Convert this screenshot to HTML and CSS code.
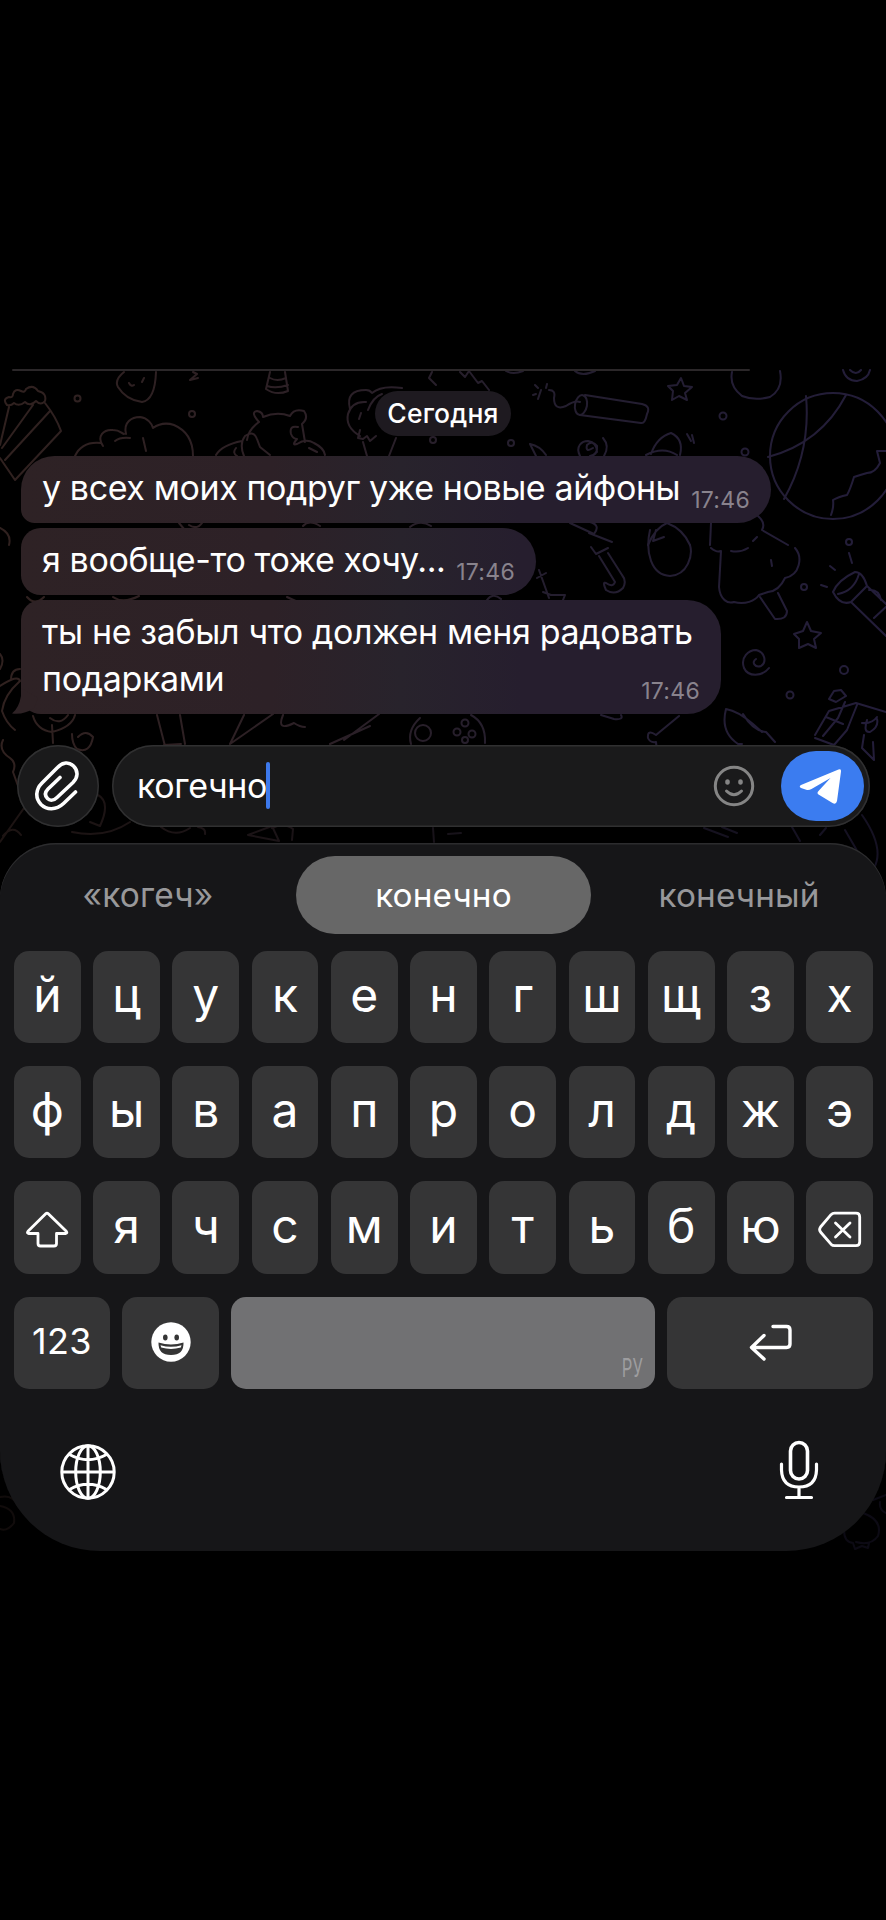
FILE: index.html
```html
<!DOCTYPE html>
<html lang="ru">
<head>
<meta charset="utf-8">
<title>Чат</title>
<link rel="stylesheet" href="styles.css">
</head>
<body>
<main class="screen">
  <svg class="wallpaper" viewBox="0 369 886 1182" fill="none" stroke-width="2" stroke-linecap="round" stroke-linejoin="round">
    <defs>
      <linearGradient id="ink" gradientUnits="userSpaceOnUse" x1="0" y1="0" x2="886" y2="0">
        <stop offset="0" stop-color="#30211f"/><stop offset=".35" stop-color="#2c2026"/><stop offset=".6" stop-color="#241e2e"/><stop offset="1" stop-color="#231d3a"/>
      </linearGradient>
    </defs>
    <g stroke="url(#ink)">
      <!-- popcorn -->
      <path d="M9 407 0 445M33 405 2 448M50 411 5 460M45 403Q56 417 61 431L15 480 0 458M7 405Q2 399 9 397 13 398 13 394 15 388 21 391 25 393 26 389 33 384 38 391 47 393 45 401 41 406 36 401 30 407 25 402 19 407 14 403 11 406 7 405"/>
      <circle cx="77.500" cy="398.500" r="3"/><circle cx="192" cy="414" r="3"/>
      <!-- berry, bolt and candy corn -->
      <path d="M124 372Q114 380 118 387 126 400 142 402 155 400 156 372M129 383Q131 387 134 385M144 378 142 382M193 372 197 374 190 380 198 378M270 372 266 389Q276 396 288 391L285 372M270 378Q277 382 286 378M267 386Q276 389 288 385"/>
      <!-- cloud -->
      <path d="M75 456Q82 441 101 443M103 446C96 436 104 429 113 430 120 430 121 433 124 434M115 441Q120 437 130 438M126 434C123 422 132 417 140 417 148 418 152 424 153 428 160 423 168 423 174 425 188 431 193 442 193 456M143 438 146 451"/>
      <!-- bear -->
      <path d="M259 422Q250 412 257 411 263 412 263 417 277 411 290 416 294 408 304 411 309 418 302 424L305 442M259 422Q248 430 247 440M244 456Q239 444 245 436 254 430 257 439L260 447 270 455M216 455Q222 445 242 441M298 427Q289 425 291 434 293 439 297 439 291 446 297 444 306 438 314 443 324 448 325 455M236 448Q232 453 237 456M309 448 317 452"/>
      <!-- ice cream -->
      <path d="M350 409Q345 390 366 390 370 390 372 393 381 385 402 388M368 410Q373 397 382 394M360 436Q345 427 348 414 352 401 366 402M360 430 358 438 363 439 367 436 370 441 376 436M363 442 367 456M396 438 389 456M359 419 361 413M432 372 429 378 436 385"/>
      <circle cx="433" cy="440" r="3"/><circle cx="511" cy="443" r="3"/>
      <!-- rocket trail and firework -->
      <path d="M460 372 465 377 469 371 478 383 482 381 489 390M575 371Q582 377 595 371M506 371Q513 375 523 371M538 388 535 385M541 390 538 399M546 388 547 384M536 394 533 395M549 390Q556 390 554 398 554 411 566 406 575 400 580 402M585 395 642 404Q651 406 647 414 645 424 641 423L580 415"/>
      <ellipse cx="581" cy="405" rx="6" ry="10" transform="rotate(10 581 405)"/>
      <path d="M681 378 684 386 692 387 685 393 687 400 679 396 672 400 673 391 668 386 677 385Z"/>
      <circle cx="723" cy="416" r="3.500"/><circle cx="745" cy="452" r="3.500"/>
      <path d="M732 372C730 382 734 390 742 396 752 400 762 399 770 397 780 391 782 381 780 371M843 370Q846 381 857 381 868 379 870 370M850 370Q856 376 861 370"/>
      <!-- basketball -->
      <circle cx="833" cy="456" r="63"/><path d="M806 396Q811 451 784 499M846 395Q821 443 768 457M886 451 877 451 880 463Q875 473 867 473 860 475 854 477 850 490 847 495 838 497 833 500 834 507 831 515 886 535M872 466 886 486M845 490 886 521M831 511 886 526"/>
      <!-- comet, spiral and hat -->
      <path d="M530 444Q540 446 546 455M530 444 536 456M593 448Q585 453 587 445 592 440 597 446 598 455 590 456M580 456C575 446 582 441 588 441 594 442 597 446 597 452M603 438Q610 446 604 456M651 454Q657 437 671 433 684 439 680 455M646 455Q663 446 677 455M687 434 691 441M692 435 694 443"/>
      <!-- pieces seen between bubbles -->
      <path d="M179 523 184 529M189 525Q197 530 202 523M303 526Q309 519 320 526M410 527Q420 519 431 526M570 523 594 534Q601 525 590 522M589 533 612 542M648 545Q655 528 667 523 683 529 690 545M656 530 653 541 664 537M711 523 710 545M758 516Q766 523 762 530L788 545M757 537 753 541M27 597Q35 606 44 597M113 597Q123 604 139 596M287 597 300 603M487 600Q493 592 501 599M543 592 551 595 565 595 563 600M539 570 549 598M537 578 546 573M0 528Q12 534 9 545"/>
      <circle cx="849" cy="542" r="3"/>
      <!-- umbrella, balloon, tree -->
      <path d="M591 547 596 554 608 548M599 556 615 582Q613 588 606 583 602 581 606 590 615 596 623 588 627 581 622 575L608 553M650 530C645 552 651 575 670 576 688 575 693 555 690 545M711 548Q717 553 721 551L719 587C720 600 728 604 734 602 745 605 755 601 759 595L768 592Q779 591 785 578C800 575 803 557 795 548M731 551Q740 553 748 548M760 597 775 619Q787 620 787 611L778 593M771 560 772 566"/>
      <circle cx="804" cy="587" r="3"/>
      <!-- telescope -->
      <path d="M833 592Q838 580 855 572 863 572 867 586L851 602Q840 606 833 592M838 594Q854 591 859 574M851 602 886 636M867 586 886 604M869 590Q879 589 881 600M849 553 852 563M830 566 835 570M821 585 827 587M887 606 874 618"/>
      <path d="M807 622 811 631 821 633 814 639 816 648 808 644 799 648 799 639 794 634 803 631Z"/>
      <path d="M769 668C762 677 748 677 744 668 740 657 749 650 756 650 765 652 767 662 761 666 755 668 751 662 756 659"/>
      <circle cx="844" cy="670" r="4"/><circle cx="790" cy="695" r="3.500"/>
      <path d="M829 699 834 691 841 690 846 696 836 702ZM815 735 829 711 856 703 886 712M845 702 838 718 823 736M857 705 847 730 834 745 815 738M826 717 843 724M862 723Q872 724 877 717M867 720Q863 733 870 732 879 727 877 719M864 735 862 748 874 760 873 742"/>
      <path d="M726 709Q720 732 738 744M726 709Q738 711 753 724L762 732M743 714Q753 731 766 732L775 742M738 744 742 744M601 715 614 719Q624 720 621 715M679 716 656 735Q647 729 648 738 650 743 656 742 656 751 664 748 664 742L693 717M562 744C559 731 565 728 572 728 579 728 579 734 577 744M579 732Q588 724 591 744M590 731Q600 727 603 743M601 734 610 744"/>
      <!-- cookie -->
      <path d="M471 715Q486 723 485 743"/><circle cx="465" cy="723" r="3.500"/><circle cx="457" cy="732" r="3.500"/><circle cx="472" cy="734" r="3.500"/><circle cx="465" cy="740" r="3"/>
      <!-- left side shapes -->
      <path d="M0 654Q5 660 0 669M11 680Q11 669 20 669M0 686Q18 674 20 681 4 695 2 711 6 723 15 730M33 716Q37 730 52 732 72 727 75 715M50 718Q60 726 68 715M3 740Q-2 750 10 758 17 763 13 772L26 808M52 725 53 743M72 734Q72 744 77 749 90 754 93 737 86 729 78 737M157 715 165 746M180 715 185 744M164 745 181 744M244 715 230 744 273 714M283 715Q276 732 294 723 300 727 305 727M344 740 379 714M330 744 370 726"/>
      <circle cx="423" cy="733" r="8"/><path d="M411 744Q407 730 420 718"/>
      <g opacity=".6">
        <path d="M0 842 24 808M3 836Q13 824 21 835M98 795Q111 802 100 826L90 822M72 832Q105 839 130 822M161 827Q175 838 190 828M205 834Q206 828 198 827M248 835 272 826 279 841ZM272 828Q284 822 293 829L292 840M433 828 434 842M448 834 461 833M704 828 728 837M722 827 737 833M792 827 800 841M820 835 826 828M862 815Q885 848 874 868M845 830 866 866"/>
      </g>
      <g opacity=".35">
        <path d="M0 1497Q13 1494 18 1506M0 1506Q16 1509 14 1523 7 1532 0 1529M886 1495 873 1500M880 1502Q879 1510 886 1513M863 1513Q883 1520 878 1536 871 1546 856 1542M844 1530Q844 1542 853 1543L855 1549 862 1546 868 1548 869 1543"/>
      </g>
    </g>
  </svg>

  <section class="chat">
    <div class="prev"></div>
    <div class="date">Сегодня</div>
    <div class="msg m1"><p>у всех моих подруг уже новые айфоны</p><time>17:46</time></div>
    <div class="msg m2"><p>я вообще-то тоже хочу...</p><time>17:46</time></div>
    <div class="msg m3"><p>ты не забыл что должен меня радовать<br>подарками</p><time>17:46</time>
      <svg class="tail" viewBox="0 0 26 26"><path d="M9 0V8Q7 20 0 25.500 12 27 22 20L26 10Z" fill="#2e2225"/></svg>
    </div>
  </section>

  <section class="composer">
    <button class="attach"><svg viewBox="0 0 82 82" width="82" height="82" fill="none" stroke="#fff" stroke-width="3.600" stroke-linecap="round" stroke-linejoin="round"><path d="M58.500 47 46.500 58.500C39 65.500 29.500 65 24 59.500 18 53 18.500 44.500 25 38L40.500 22.500C45.500 17 52 16.500 56.500 21 61.500 26 61 32.500 56 37.500L40 52.500C37 55.500 33 56 30.500 53.500 27.500 50.500 28 47 31 44L43 32.500"/></svg></button>
    <div class="field">
      <span class="typed">когечно</span><i class="caret"></i>
      <svg class="smile" viewBox="0 0 42 42" width="42" height="42" fill="none" stroke="#858585" stroke-width="3"><circle cx="21" cy="21" r="18.700"/><ellipse cx="14.500" cy="17" rx="2.300" ry="2.800" fill="#858585" stroke="none"/><ellipse cx="27.500" cy="17" rx="2.300" ry="2.800" fill="#858585" stroke="none"/><path d="M13.500 26Q21 33.500 28.500 26" stroke-linecap="round"/></svg>
      <button class="send"><svg viewBox="0 0 83 70" width="83" height="70"><path d="M20 34 57.500 18.400Q60.500 17.500 60 20.500L56 50Q55 54 51.500 52L37.500 43.500Q35.500 42 37.500 40L49.500 27 30.500 38Q28.500 39.300 26 39L20 37Q17.500 35.500 20 34Z" fill="#fff"/></svg></button>
    </div>
  </section>

  <section class="keyboard">
    <div class="suggest"><span class="s1">«когеч»</span><span class="on">конечно</span><span class="s3">конечный</span></div>
    <div class="rows">
      <div class="row"><b>й</b><b>ц</b><b>у</b><b>к</b><b>е</b><b>н</b><b>г</b><b>ш</b><b>щ</b><b>з</b><b>х</b></div>
      <div class="row"><b>ф</b><b>ы</b><b>в</b><b>а</b><b>п</b><b>р</b><b>о</b><b>л</b><b>д</b><b>ж</b><b>э</b></div>
      <div class="row">
        <b><svg viewBox="0 0 66 92" width="66" height="92" fill="none" stroke="#fff" stroke-width="2.800" stroke-linejoin="round"><path d="M31.700 31.800Q33 30.500 34.300 31.800L52.300 49.300Q53.800 51.200 51.500 51.500H42.500V61.500Q42.500 64 40 64H26.500Q24 64 24 61.500V51.500H14.800Q12.500 51.200 14 49.300Z"/></svg></b>
        <b>я</b><b>ч</b><b>с</b><b>м</b><b>и</b><b>т</b><b>ь</b><b>б</b><b>ю</b>
        <b><svg viewBox="0 0 66 92" width="66" height="92" fill="none" stroke="#fff" stroke-width="2.800" stroke-linejoin="round" stroke-linecap="round"><path d="M27.500 31.200H49Q52.700 31.200 52.700 35V60Q52.700 63.700 49 63.700H27.500Q25.500 63.700 24 62.200L13.500 50Q11.700 47.500 13.500 45L24 32.700Q25.500 31.200 27.500 31.200ZM28.500 41 43 55M43 41 28.500 55"/></svg></b>
      </div>
      <div class="row bottom">
        <b class="num">123</b>
        <b><svg viewBox="0 0 40 40" width="40" height="40"><circle cx="20" cy="20" r="19.700" fill="#fff"/><g fill="#353535"><ellipse cx="14.300" cy="15.500" rx="2.300" ry="3"/><ellipse cx="25.700" cy="15.500" rx="2.300" ry="3"/><path d="M7.500 20.500Q20 24.500 32.500 20.500 33 33 20 33 7 33 7.500 20.500Z"/></g><path d="M9.500 23.200Q20 26.500 30.500 23.200L29.800 25.600Q20 28.500 10.200 25.600Z" fill="#fff"/></svg></b>
        <b class="space"><em>РУ</em></b>
        <b><svg viewBox="0 0 44 40" width="44" height="40" fill="none" stroke="#fff" stroke-width="3.400" stroke-linecap="round" stroke-linejoin="round"><path d="M25 4.500H38.500Q42 4.500 42 8V22Q42 25.500 38.500 25.500H3.500M16 13.500 3.500 25.500 16 37"/></svg></b>
      </div>
    </div>
    <div class="dock">
      <svg viewBox="0 0 56 56" width="56" height="56" fill="none" stroke="#fff" stroke-width="3"><circle cx="28" cy="28" r="26.200"/><ellipse cx="28" cy="28" rx="12.300" ry="26.200"/><path d="M28 2V54M2 28H54M9.500 10.500Q28 21 46.500 10.500M9.500 45.500Q28 35 46.500 45.500"/></svg>
      <svg class="mic" viewBox="0 0 40 60" width="40" height="60" fill="none" stroke="#fff" stroke-width="3.200" stroke-linecap="round"><rect x="11.500" y="2.500" width="17" height="36.500" rx="8.500" stroke-width="3.600"/><path d="M2.500 24V30Q3 47 20 47 37 47 37.500 30V24M20 47V57M7.500 57.500H32.500"/></svg>
    </div>
  </section>
</main>
</body>
</html>
```

FILE: styles.css
```css
* { box-sizing: border-box; }
body { margin: 0; background: #000; color: #fff; font-family: Inter, "Noto Sans", sans-serif; }
button { border: 0; padding: 0; color: inherit; font: inherit; }
svg { display: block; }
.screen { position: relative; width: 886px; height: 1182px; margin: 369px 0; overflow: hidden; display: flex; flex-direction: column; }
.wallpaper { position: absolute; inset: 0; width: 886px; height: 1182px; }
.chat { position: relative; height: 376px; display: flex; flex-direction: column; align-items: flex-start; }
.prev { height: 2px; width: 738px; margin-left: 12px; background: #2b2729; border-radius: 2px; }
.date { align-self: center; height: 45px; width: 136px; margin: 20px 0 19.500px; border-radius: 23px; background: #1e1a20; font-size: 26.500px; line-height: 44px; font-weight: 500; text-align: center; letter-spacing: 0.200px; }
.msg { position: relative; margin-left: 21px; height: 67.500px; margin-bottom: 4.700px; padding: 9px 21px 0 21px; display: flex; justify-content: space-between; border-radius: 34px 34px 34px 14px; background: linear-gradient(90deg, #2e2225 0, #2d2127 250px, #28232c 380px, #261e2e 500px); font-size: 34px; line-height: 46.700px; white-space: nowrap; }
.msg p { margin: 0; letter-spacing: -0.400px; }
.msg time { align-self: flex-end; font-size: 23px; line-height: 28px; margin-bottom: 9.500px; letter-spacing: 0.300px; color: #89838d; }
.m1 { width: 750px; }
.m2 { width: 515px; border-radius: 20px 34px 34px 20px; }
.m3 { width: 700px; height: 114px; border-radius: 20px 34px 34px 20px; }
.m3 p { letter-spacing: -0.350px; }
.m3 time { position: absolute; right: 21px; bottom: 0; margin-bottom: 9px; }
.tail { position: absolute; left: -9px; bottom: 0; width: 26px; height: 26px; }
.composer { position: relative; height: 82px; padding: 0 16px 0 17px; display: flex; gap: 13px; }
.attach { width: 82px; height: 82px; border-radius: 50%; background: #1a1a1b; box-shadow: inset 0 0 0 1.500px #303031; }
.field { flex: 1; display: flex; align-items: center; padding: 0 6px 0 25px; border-radius: 41px; background: #1a1a1b; box-shadow: inset 0 0 0 1.500px #303031; font-size: 34px; line-height: 44px; }
.typed { letter-spacing: -0.350px; }
.caret { width: 4px; height: 47px; margin: 0 0 2px -1px; border-radius: 2px; background: #3d79ec; }
.smile { margin-left: auto; margin-right: 26px; }
.send { width: 83px; height: 70px; border-radius: 35px; background: #3b7cf0; }
.keyboard { position: relative; margin-top: 16px; height: 708px; padding: 13px 13px 0 14px; border-radius: 56px 56px 100px 100px; background: #161618; box-shadow: inset 0 1.500px 0 #2c2c2e; }
.suggest { display: grid; grid-template-columns: 282px 295px 282px; height: 78px; line-height: 78px; text-align: center; font-size: 33.300px; letter-spacing: 0.150px; color: #98989a; }
.suggest .on { border-radius: 39px; background: #676767; color: #fff; }
.suggest .s1 { font-size: 33.500px; padding-right: 14px; }
.suggest .s3 { padding-left: 14px; }
.rows { margin-top: 16.500px; display: grid; gap: 22.900px; }
.row { display: grid; grid-template-columns: repeat(11, 1fr); gap: 12.400px; height: 92.500px; }
.row b { display: flex; justify-content: center; align-items: center; border-radius: 15px; background: #353536; font-size: 48px; font-weight: 400; line-height: 84px; height: 92.500px; padding-bottom: 4px; min-width: 0; }
.row b svg { margin-bottom: -4px; }
.bottom { grid-template-columns: 96px 96.500px 1fr 206px; }
.bottom .num { font-size: 36px; letter-spacing: 0.400px; padding-bottom: 3px; }
.bottom b svg { margin-bottom: -2px; }
.row .space { background: #717173; justify-content: flex-end; align-items: flex-end; padding: 0 12px 6px 0; }
.space em { font-style: normal; font-size: 26px; line-height: 30px; color: #9d9d9f; transform: scaleX(.64); transform-origin: right; font-weight: 400; }
.dock { display: flex; justify-content: space-between; align-items: center; padding: 55px 54px 0 46px; }
.mic { margin-top: -4px; }
```
